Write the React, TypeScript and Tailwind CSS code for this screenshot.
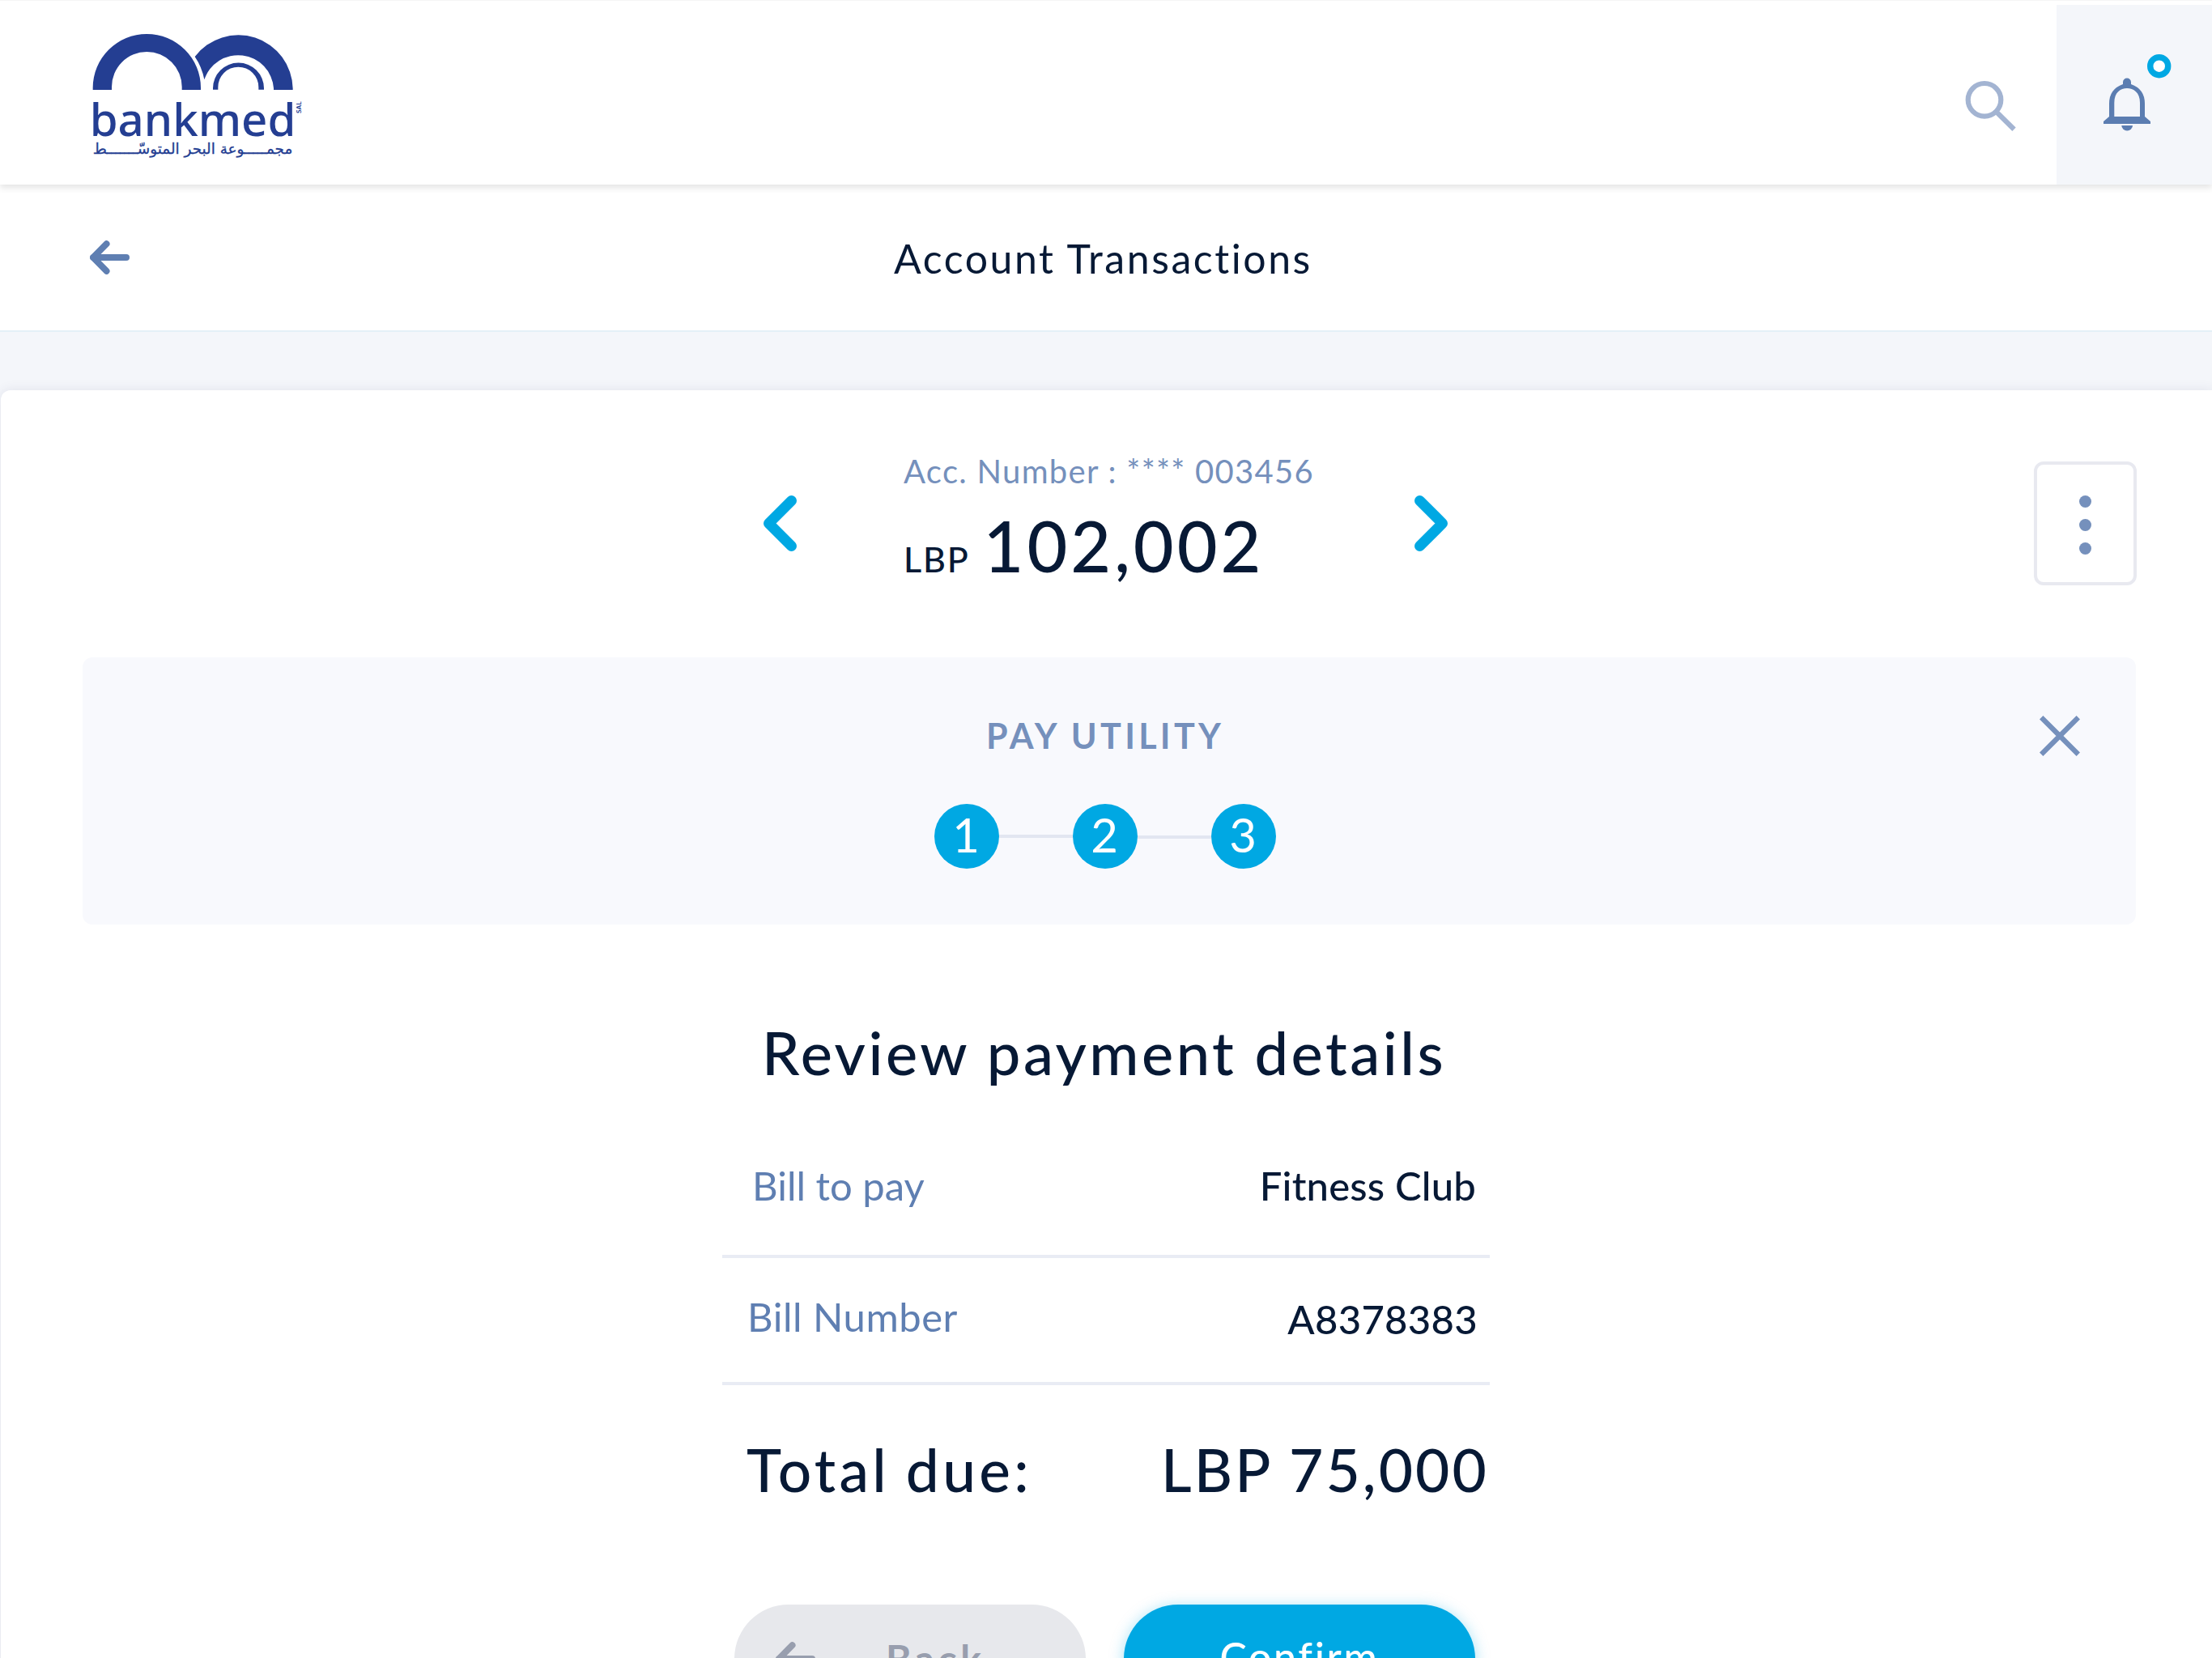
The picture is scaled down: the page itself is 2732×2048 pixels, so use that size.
import type { ReactNode } from 'react'

const Logo = () => (
	<svg width="320" height="200" viewBox="0 0 960 600" fill="#243e92" role="img" aria-label="bankmed">
		{/* Arches */}
		<path d="M104 273V265A200 199 0 0 1 504 265V273H434V262A130 130 0 0 0 174 262V273Z" />
		<path d="M482 150A202 202 0 0 1 845 268V273H774V267A132 132 0 0 0 517 235Q508 188 482 150Z" />
		<path d="M549 272V267A94.5 94.5 0 0 1 738 267V272H718V263A75 75 0 0 0 568 263V272Z" />

		<text x="92" y="443" textLength="764" lengthAdjust="spacingAndGlyphs" className="font-['Noto_Sans',sans-serif] text-[170px] font-medium">
			bankmed
		</text>
		<text x="104" y="509" textLength="740" lengthAdjust="spacingAndGlyphs" stroke="#243e92" strokeWidth="1" className="font-['DejaVu_Sans',sans-serif] text-[54px]">
			مجمـــــوعة البحر المتوسّـــــــط
		</text>
		<text transform="translate(876 360) rotate(-90)" className="font-['Lato',sans-serif] text-[25px] font-bold">
			SAL
		</text>
	</svg>
)

const Chevron = ({ className }: { className?: string }) => (
	<svg width="41" height="69" viewBox="0 0 41 69" fill="none" className={className}>
		<path d="M34.5 6.5L6.5 34.5L34.5 62.5" stroke="#00a8e3" strokeWidth="13" strokeLinecap="round" strokeLinejoin="round" />
	</svg>
)

const Arrow = ({ className }: { className?: string }) => (
	<svg width="49" height="42" viewBox="0 0 49 42" fill="none" stroke="currentColor" strokeWidth="8" strokeLinecap="round" strokeLinejoin="round" className={className}>
		<path d="M20.5 4.2L4 21L20.5 37.8M4 21H45" />
	</svg>
)

const Step = ({ children }: { children: ReactNode }) => (
	<div className="flex size-20 items-center justify-center rounded-full bg-[#00a8e3] pr-0.5 pb-[5px] text-[58px] leading-[75px] text-white">{children}</div>
)

/**
 * Last step of the utility payment: review and confirm.
 */
const App = () => {
	return (
		<div className="h-[2048px] w-[2732px] overflow-hidden bg-[#f4f6fa] font-['Lato',sans-serif] text-[#071935]">
			{/* Header */}
			<header className="relative flex h-[228px] justify-between border-t border-[#f5f5f5] bg-white pl-20 shadow-[0_4px_8px_rgba(0,0,0,0.11)]">
				<div className="pt-[19px]">
					<Logo />
				</div>

				<div className="flex">
					<svg width="66" height="66" viewBox="0 0 66 66" fill="none" stroke="#a3b4d2" strokeWidth="6.2" className="mt-[98px] mr-[48px]">
						<circle cx="25" cy="24.3" r="20.3" />
						<path d="M39 38.5L61.5 60.7" />
					</svg>

					<div className="mt-[5px] h-[222px] w-[192px] bg-[#f4f6fa]">
						<svg width="192" height="222" viewBox="0 0 192 222">
							<g fill="#5b7db1">
								<path d="M82 98V95.500A5 5 0 0 1 92 95.500V98Q109 104 109 122V138L116 144V147H58V144L65 138V122Q65 104 82 98ZM71.300 138H103V121C103 108 95 103 87 103S71.300 108 71.300 121Z" fillRule="evenodd" />
								<path d="M80.300 149H94A6.850 6.500 0 0 1 80.300 149Z" />
							</g>
							<circle cx="126.700" cy="75.700" r="11" fill="white" stroke="#00a8e3" strokeWidth="7.400" />
						</svg>
					</div>
				</div>
			</header>

			{/* Page title */}
			<div className="flex h-[182px] items-center border-b-2 border-[#e4f0f7] bg-white pl-[111px]">
				<Arrow className="text-[#5f7fb2]" />
				<h1 className="mt-[2px] ml-[944px] text-[50px] tracking-[2.55px]">Account Transactions</h1>
			</div>

			<main className="mt-[72px] ml-px h-[1600px] rounded-tl-xl bg-white shadow-[0_0_14px_rgba(60,60,110,0.11)]">
				{/* Account */}
				<div className="flex items-center pt-[88px] pr-[93px] pl-[942px]">
					<Chevron />
					<div className="-mt-[12px] ml-[132px] h-[165px] w-[631px] self-start whitespace-nowrap">
						<p className="text-[40px] leading-12 tracking-[1.3px] text-[#7590bc]">Acc. Number : **** 003456</p>
						<p className="mt-[18px] text-[86px] leading-[100px] font-medium">
							<span className="mr-[17px] text-[43px] tracking-[1.8px]">LBP</span>
							<span className="tracking-[4px]">102,002</span>
						</p>
					</div>
					<Chevron className="rotate-180" />
					<button className="ml-auto flex h-[153px] w-[127px] flex-col items-center justify-center gap-[14px] rounded-xl border-4 border-[#e8e9f0] pt-[3px]">
						<span className="size-[15px] rounded-full bg-[#7590bc]" />
						<span className="size-[15px] rounded-full bg-[#7590bc]" />
						<span className="size-[15px] rounded-full bg-[#7590bc]" />
					</button>
				</div>

				{/* Steps */}
				<section className="mt-[89px] mr-[94px] ml-[101px] h-[330px] rounded-xl bg-[#f8f9fd] pt-[71px]">
					<div className="flex items-center justify-between pr-[69px] pl-[1116px]">
						<h2 className="text-[43px] leading-[52px] font-bold tracking-[4.3px] text-[#7590bc]">PAY UTILITY</h2>
						<svg width="50" height="50" viewBox="0 0 50 50" stroke="#7590bc" strokeWidth="6.2">
							<path d="M2.200 2.200L47.800 47.800M47.800 2.200L2.200 47.800" />
						</svg>
					</div>
					<div className="mt-[58px] flex items-center pl-[1052px]">
						<Step>1</Step>
						<div className="h-1 w-[91px] bg-[#e2e6f1]" />
						<Step>2</Step>
						<div className="mt-0.5 h-1 w-[91px] bg-[#e2e6f1]" />
						<Step>3</Step>
					</div>
				</section>

				{/* Payment details */}
				<div className="mt-[114px] ml-[891px] w-[948px] whitespace-nowrap">
					<h2 className="pl-[49px] text-[74px] leading-[88px] font-medium tracking-[3.5px]">Review payment details</h2>

					<div className="mt-[90px] flex justify-between border-b-4 border-[#e9ecf4] pr-[17px] pb-[56px] pl-[37px] text-[49px] leading-[60px]">
						<p className="text-[#5f7fb2]">Bill to pay</p>
						<p className="font-medium tracking-[0.2px]">Fitness Club</p>
					</div>
					<div className="flex justify-between border-b-4 border-[#e9ecf4] pt-[42px] pr-[15px] pb-[51px] pl-[31px] text-[49px] leading-[60px]">
						<p className="tracking-[0.5px] text-[#5f7fb2]">Bill Number</p>
						<p className="-mb-[3px] pt-[3px] font-medium tracking-[0.3px]">A8378383</p>
					</div>
					<div className="flex justify-between pt-[60px] pr-px pl-[30px] text-[73px] leading-[88px] font-medium">
						<p className="tracking-[4.3px] [word-spacing:-3px]">Total due:</p>
						<p className="tracking-[3.1px]">LBP 75,000</p>
					</div>

					{/* Buttons */}
					<div className="mt-[123px] flex gap-[47px] pl-[15px]">
						<button className="flex h-[134px] w-[434px] items-center rounded-full bg-[#e7e8ec] pl-[51px] text-[#989eae]">
							<Arrow />
							<span className="ml-[87px] text-[48px] font-bold tracking-[4.5px]">Back</span>
						</button>
						<button className="h-[134px] w-[434px] rounded-full bg-[#00a8e3] pb-1.5 text-[50px] font-medium tracking-[2.7px] text-white shadow-[0_2px_18px_rgba(0,168,227,0.35)]">
							Confirm
						</button>
					</div>
				</div>
			</main>
		</div>
	)
}

export default App
